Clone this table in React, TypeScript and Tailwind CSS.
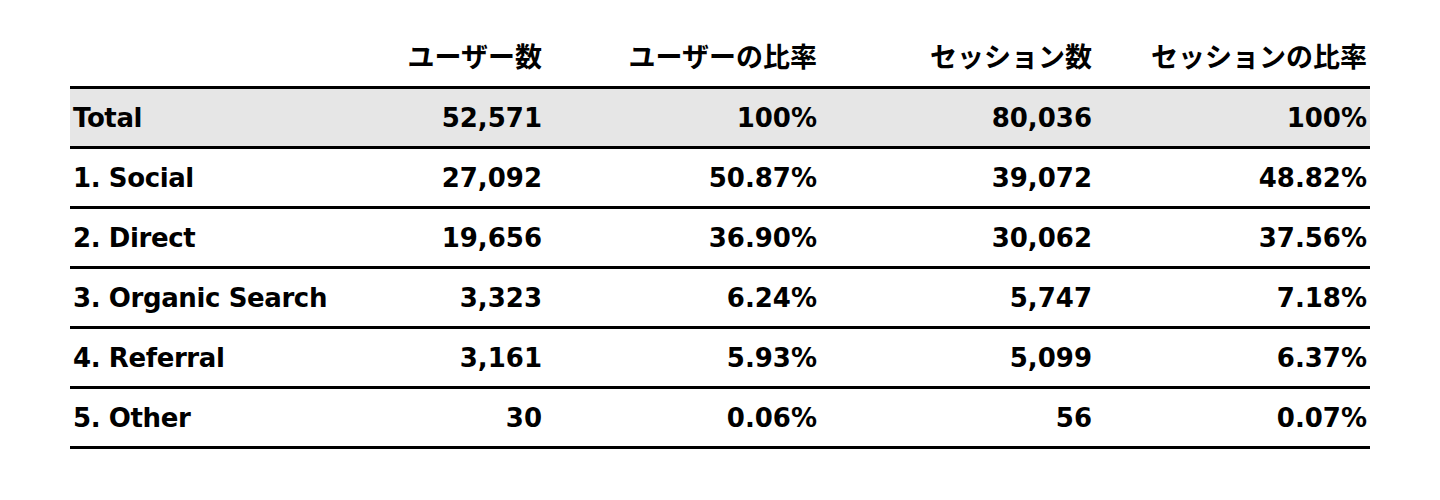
const headers = ["ユーザー数", "ユーザーの比率", "セッション数", "セッションの比率"];

type Row = {
  label: string;
  users: string;
  userRate: string;
  sessions: string;
  sessionRate: string;
  total?: boolean;
};

const rows: Row[] = [
  { label: "Total", users: "52,571", userRate: "100%", sessions: "80,036", sessionRate: "100%", total: true },
  { label: "1. Social", users: "27,092", userRate: "50.87%", sessions: "39,072", sessionRate: "48.82%" },
  { label: "2. Direct", users: "19,656", userRate: "36.90%", sessions: "30,062", sessionRate: "37.56%" },
  { label: "3. Organic Search", users: "3,323", userRate: "6.24%", sessions: "5,747", sessionRate: "7.18%" },
  { label: "4. Referral", users: "3,161", userRate: "5.93%", sessions: "5,099", sessionRate: "6.37%" },
  { label: "5. Other", users: "30", userRate: "0.06%", sessions: "56", sessionRate: "0.07%" },
];

const rowClass =
  "grid grid-cols-[200px_275px_275px_275px_275px] h-[60px] items-center border-b-[3px] border-black";

export default function App() {
  return (
    <div
      className="min-h-[500px] bg-white pt-[29px] text-black"
      style={{ fontFamily: '"DejaVu Sans", "Noto Sans CJK JP", sans-serif' }}
    >
      <div className="mx-[70px] w-[1300px] text-[26px] font-bold leading-none">
        <div className={rowClass}>
          <div />
          {headers.map((h) => (
            <div key={h} className="whitespace-nowrap px-[3px] text-right text-[27px]">
              {h}
            </div>
          ))}
        </div>

        {rows.map((row) => (
          <div key={row.label} className={`${rowClass} ${row.total ? "bg-[#e6e6e6]" : ""}`}>
            <div className="whitespace-nowrap px-[3px] tracking-[-0.015em]">{row.label}</div>
            <div className="px-[3px] text-right">{row.users}</div>
            <div className="px-[3px] text-right">{row.userRate}</div>
            <div className="px-[3px] text-right">{row.sessions}</div>
            <div className="px-[3px] text-right">{row.sessionRate}</div>
          </div>
        ))}
      </div>
    </div>
  );
}
